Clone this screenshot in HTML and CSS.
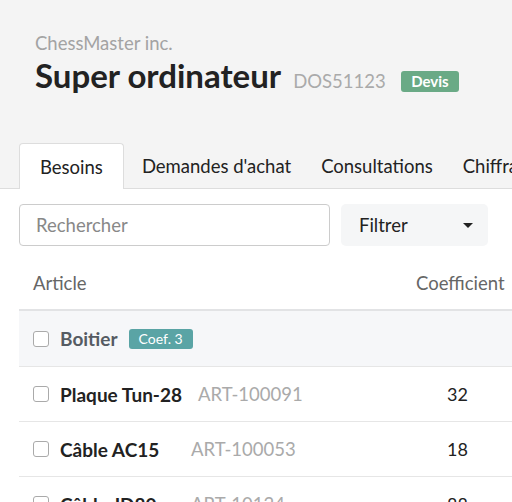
FILE: index.html
```html
<!DOCTYPE html>
<html lang="fr">
<head>
<meta charset="utf-8">
<title>Super ordinateur</title>
<link rel="stylesheet" href="styles.css">
</head>
<body>
<div class="page">
  <header class="header">
    <div class="company">ChessMaster inc.</div>
    <div class="title-row">
      <h1 class="title">Super ordinateur</h1>
      <span class="ref">DOS51123</span>
      <span class="badge badge-green">Devis</span>
    </div>
  </header>
  <nav class="tabs">
    <div class="tab active">Besoins</div>
    <div class="tab">Demandes d'achat</div>
    <div class="tab">Consultations</div>
    <div class="tab">Chiffrage</div>
  </nav>
  <main class="content">
    <div class="toolbar">
      <div class="search">Rechercher</div>
      <div class="filter"><span>Filtrer</span><span class="caret"></span></div>
    </div>
    <div class="table">
      <div class="row head">
        <div class="cell-article">Article</div>
        <div class="cell-coef">Coefficient</div>
      </div>
      <div class="row group">
        <div class="cell-article"><span class="check"></span><span class="group-name">Boitier</span><span class="badge badge-teal">Coef. 3</span></div>
        <div class="cell-coef"></div>
      </div>
      <div class="row">
        <div class="cell-article"><span class="check"></span><span class="name">Plaque Tun-28</span><span class="code">ART-100091</span></div>
        <div class="cell-coef num">32</div>
      </div>
      <div class="row">
        <div class="cell-article"><span class="check"></span><span class="name">Câble AC15</span><span class="code">ART-100053</span></div>
        <div class="cell-coef num">18</div>
      </div>
      <div class="row">
        <div class="cell-article"><span class="check"></span><span class="name">Câble JD80</span><span class="code">ART-10124</span></div>
        <div class="cell-coef num">88</div>
      </div>
    </div>
  </main>
</div>
</body>
</html>
```

FILE: styles.css
```css
* { box-sizing: border-box; }
html, body { margin: 0; padding: 0; }
body {
  background: #f4f4f4;
  font-family: Lato, "Open Sans", sans-serif;
  color: #222;
}
.page { width: 512px; height: 502px; overflow: hidden; }
.header { padding: 32px 0 0 35px; }
.company { font-size: 18.5px; line-height: 22px; color: #a3a3a3; }
.title-row { display: flex; align-items: baseline; margin-top: 1px; height: 40px; white-space: nowrap; }
.title { margin: 0; font-size: 33px; font-weight: 700; color: #222; line-height: 40px; }
.ref { font-size: 18.5px; color: #aaa; margin-left: 12px; }
.badge {
  display: inline-flex; align-items: center; justify-content: center;
  color: #fff; font-weight: 700; border-radius: 3px; line-height: 1;
}
.badge-green { background: #6aaa86; font-size: 15px; height: 21px; padding: 0 10.5px; margin-left: 15px; align-self: center; margin-top: 12px; }
.tabs {
  display: flex; margin-top: 48px; padding-left: 19px;
  border-bottom: 1px solid #ddd; height: 46px; white-space: nowrap;
}
.tab { font-size: 18.5px; line-height: 45px; padding: 1px 15px 0; color: #222; flex: none; }
.tab.active {
  background: #fff; border: 1px solid #ddd; border-bottom: none;
  border-radius: 4px 4px 0 0; height: 46px; margin-bottom: -1px;
  padding: 0 20px; margin-right: 3px; line-height: 46px;
}
.content { background: #fff; padding: 15px 0 0 19px; height: 400px; }
.toolbar { display: flex; gap: 11px; height: 42px; }
.search {
  width: 311px; border: 1px solid #ccc; border-radius: 4px;
  font-size: 18.5px; color: #888; padding-left: 16px; display: flex; align-items: center;
}
.filter {
  width: 147px; background: #f5f6f7; border-radius: 5px;
  display: flex; align-items: center; justify-content: space-between;
  padding: 0 15px 0 18px; font-size: 18.5px; color: #222;
}
.caret { width: 0; height: 0; border-left: 5px solid transparent; border-right: 5px solid transparent; border-top: 5px solid #222; }
.table { width: 508px; }
.row { display: flex; height: 55px; align-items: center; border-bottom: 1px solid #e6e6e6; }
.row.head { height: 65px; align-items: flex-start; border-bottom: 2px solid #e2e3e5; color: #666; font-size: 18.5px; line-height: 22px; padding-top: 26px; }
.row.group { background: #f6f7f9; height: 56px; }
.cell-article { flex: 1; padding-left: 14px; display: flex; align-items: center; }
.cell-coef { width: 111px; flex: none; white-space: nowrap; }
.num { padding-left: 31px; font-size: 18px; color: #222; }
.check { width: 16px; height: 16px; border: 1px solid #aaa; border-radius: 3px; margin-right: 11px; flex: none; background: #fff; }
.group-name { font-size: 19px; font-weight: 700; color: #555b63; }
.badge-teal { background: #5aa4a5; font-size: 14px; font-weight: 400; height: 20px; padding: 0 10px; margin-left: 11px; }
.name { font-size: 19px; font-weight: 700; color: #222; min-width: 115px; margin-right: 16px; }
.code { font-size: 18.5px; color: #aaa; }
```
